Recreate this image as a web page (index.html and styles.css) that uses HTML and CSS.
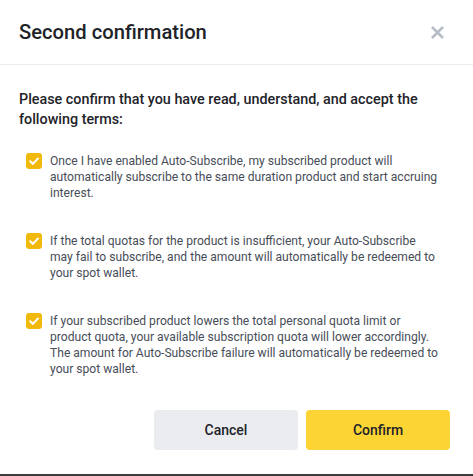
FILE: index.html
```html
<!DOCTYPE html>
<html>
<head>
<meta charset="utf-8">
<link rel="stylesheet" href="styles.css">
</head>
<body>
<div class="modal">
  <div class="header">
    <div class="title">Second confirmation</div>
    <svg class="close" width="15" height="15" viewBox="0 0 15 15"><path d="M2 2L13 13M13 2L2 13" stroke="#b7bdc6" stroke-width="2.6" stroke-linecap="butt"/></svg>
  </div>
  <div class="body">
    <div class="lead">Please confirm that you have read, understand, and accept the following terms:</div>
    <div class="list">
      <div class="item">
        <span class="check"><svg width="16" height="16" viewBox="0 0 16 16"><path d="M4.2 8.3L6.9 10.9L11.9 5.6" fill="none" stroke="#fff" stroke-width="2.1" stroke-linecap="round" stroke-linejoin="round"/></svg></span>
        <div class="text">Once I have enabled Auto-Subscribe, my subscribed product will automatically subscribe to the same duration product and start accruing interest.</div>
      </div>
      <div class="item">
        <span class="check"><svg width="16" height="16" viewBox="0 0 16 16"><path d="M4.2 8.3L6.9 10.9L11.9 5.6" fill="none" stroke="#fff" stroke-width="2.1" stroke-linecap="round" stroke-linejoin="round"/></svg></span>
        <div class="text">If the total quotas for the product is insufficient, your Auto-Subscribe <span class="nw">may fail</span> to subscribe, and the amount will automatically be redeemed to your spot wallet.</div>
      </div>
      <div class="item">
        <span class="check"><svg width="16" height="16" viewBox="0 0 16 16"><path d="M4.2 8.3L6.9 10.9L11.9 5.6" fill="none" stroke="#fff" stroke-width="2.1" stroke-linecap="round" stroke-linejoin="round"/></svg></span>
        <div class="text">If your subscribed product lowers the total personal quota limit or product quota, your available subscription quota will lower accordingly. The amount for Auto-Subscribe failure will automatically be redeemed to your spot wallet.</div>
      </div>
    </div>
    <div class="actions">
      <button class="btn cancel">Cancel</button>
      <button class="btn confirm">Confirm</button>
    </div>
  </div>
</div>
</body>
</html>
```
FILE: styles.css
```css
* { box-sizing: border-box; }
html, body { margin: 0; padding: 0; background: #fff; }
body { font-family: Roboto, "Noto Sans", sans-serif; color: #1e2329; }
.modal {
  width: 473px;
  height: 476px;
  border-bottom: 2px solid #3c3c3c;
  display: flex;
  flex-direction: column;
}
.header {
  height: 65px;
  padding: 0 28px 0 19px;
  display: flex;
  align-items: center;
  justify-content: space-between;
  border-bottom: 1px solid #eaecef;
}
.title { font-size: 20.2px; font-weight: 500; color: #1e2329; }
.close { display: block; }
.body { padding: 25px 23px 0 19px; }
.lead { font-size: 14.35px; font-weight: 500; line-height: 20px; color: #1e2329; }
.list { margin-top: 23px; margin-right: 8px; padding-left: 7px; display: flex; flex-direction: column; gap: 32px; }
.item { display: flex; gap: 8px; align-items: flex-start; }
.check {
  flex: 0 0 16px; width: 16px; height: 16px; border-radius: 3px;
  background: #f0b90b; display: block;
}
.check svg { display: block; }
.text { font-size: 12.1px; line-height: 16px; color: #474d57; }
.nw { white-space: nowrap; }
.actions { margin-top: 33px; display: flex; justify-content: flex-end; gap: 8px; }
.btn {
  width: 144px; height: 40px; border: 0; border-radius: 4px;
  font-family: inherit; font-size: 14px; font-weight: 500; color: #1e2329;
}
.cancel { background: #eaecef; }
.confirm { background: #fcd535; }
```
